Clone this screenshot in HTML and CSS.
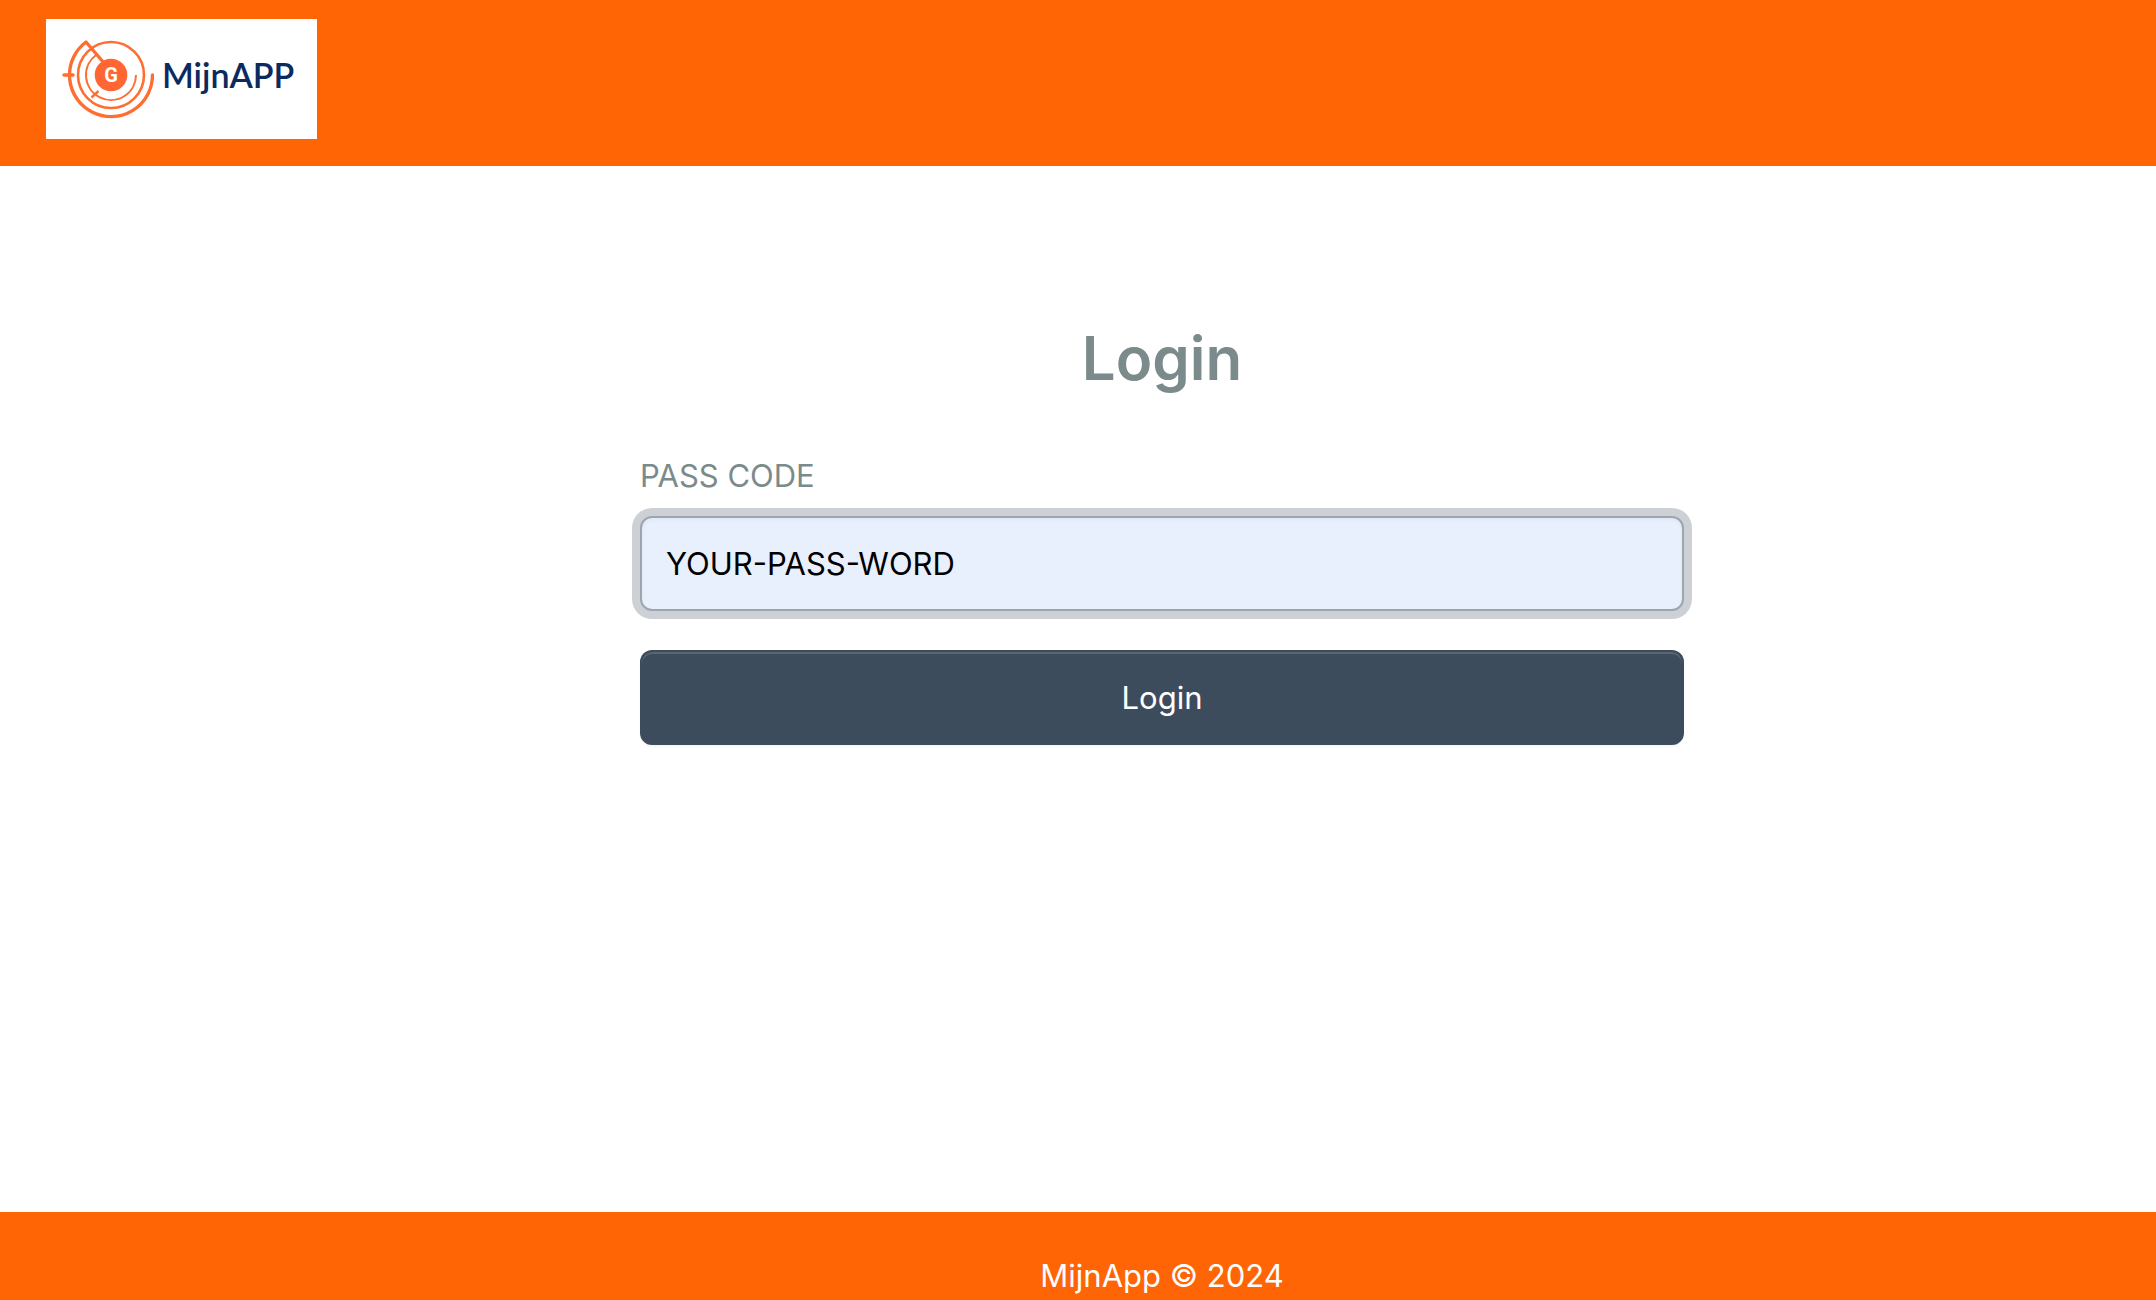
FILE: index.html
```html
<!DOCTYPE html>
<html lang="nl">
<head>
  <meta charset="utf-8">
  <meta name="viewport" content="width=device-width, initial-scale=1">
  <title>MijnApp</title>
  <link rel="stylesheet" href="styles.css">
</head>
<body>
  <header class="site-header">
    <a class="brand" href="/" aria-label="MijnAPP">
      <svg class="brand-mark" viewBox="0 0 92 88" fill="none" stroke="#ff6e30">
        <circle cx="49" cy="44" r="33" stroke-width="2.6"/>
        <path d="M90.500 44A41.500 41.500 0 1 1 24 11L42 32" stroke-width="3.400" stroke-linecap="round" stroke-linejoin="round"/>
        <path d="M74 44A25 25 0 1 1 34 24" stroke-width="2"/>
        <path d="M2 44H11" stroke-width="3.400" stroke-linecap="round"/>
        <path d="M29.500 66.500L36.500 60" stroke-width="2.400"/>
        <circle cx="49" cy="44" r="16.300" fill="#ff6633" stroke="none"/>
        <text class="brand-letter" x="49" y="51" text-anchor="middle">G</text>
      </svg>
      <span class="brand-name">MijnAPP</span>
    </a>
  </header>
  <main class="content">
    <form class="login-form">
      <h1 class="title">Login</h1>
      <label class="label" for="passcode">PASS CODE</label>
      <input class="input" id="passcode" name="passcode" type="text" value="YOUR-PASS-WORD">
      <button class="button" type="submit">Login</button>
    </form>
  </main>
  <footer class="site-footer">MijnApp © 2024</footer>
</body>
</html>
```
FILE: styles.css
```css
* {
  box-sizing: border-box;
}

body {
  display: flex;
  flex-direction: column;
  min-height: 100vh;
  margin: 0;
  background: #fff;
  color: #7b8a8b;
  font-family: Inter, "Liberation Sans", sans-serif;
  font-size: 31px;
  line-height: 48px;
}

.site-header {
  padding: 19px 46px 27px;
  background: #ff6505;
}

.brand {
  display: flex;
  align-items: center;
  gap: 8px;
  width: 271px;
  height: 120px;
  padding: 0 0 8px 16px;
  background: #fff;
  color: #0b2a60;
  text-decoration: none;
}

.brand-mark {
  flex: none;
  width: 92px;
  height: 88px;
}

.brand-letter {
  fill: #fff;
  stroke: none;
  font-family: "Liberation Sans Narrow", Roboto, sans-serif;
  font-size: 20px;
  font-weight: 700;
}

.brand-name {
  font-family: Lato, sans-serif;
  font-size: 34px;
  font-weight: 600;
}

.content {
  flex: 1;
  padding: 144px 0 96px 168px;
}

.login-form {
  display: flex;
  flex-direction: column;
  width: 100%;
  max-width: 1044px;
  margin: 0 auto;
}

.title {
  margin: 0 0 46px;
  font-size: 60px;
  font-weight: 600;
  line-height: 96px;
  text-align: center;
}

.label {
  margin-bottom: 16px;
}

.input {
  height: 95px;
  padding: 0 24px;
  border: 2px solid #9da6af;
  border-radius: 12px;
  outline: none;
  background: #e8effd;
  box-shadow: inset 0 2px 4px rgba(0, 0, 0, 0.04), 0 0 0 8px #cdd1d6;
  color: #000;
  font: inherit;
}

.button {
  height: 95px;
  margin-top: 39px;
  border: 2px solid #3d4c5c;
  border-radius: 12px;
  background: #3d4c5c;
  box-shadow: inset 0 2px 0 rgba(255, 255, 255, 0.15), 0 2px 2px rgba(0, 0, 0, 0.04);
  color: #fff;
  font: inherit;
}

.site-footer {
  height: 88px;
  padding: 40px 0 0 168px;
  background: #ff6505;
  color: #fff;
  text-align: center;
}
```
